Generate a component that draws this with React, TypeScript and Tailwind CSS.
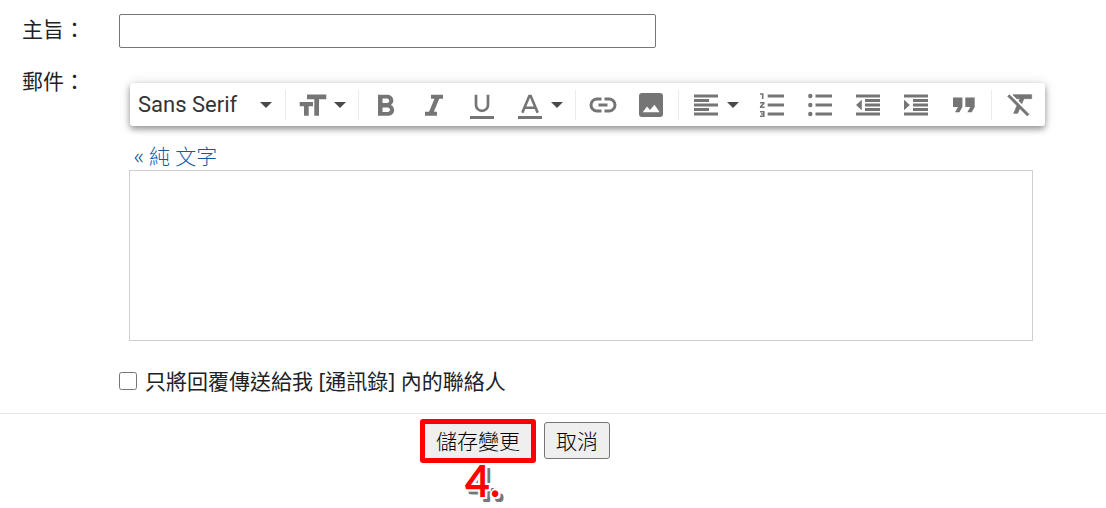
import React, { useState } from 'react';

interface IconProps {
  children: React.ReactNode;
}

const Icon: React.FC<IconProps> = ({ children }) => (
  <svg viewBox="0 0 28 28" className="w-7 h-7 shrink-0 text-[#757575]" fill="currentColor" aria-hidden="true">
    {children}
  </svg>
);

const Caret: React.FC = () => (
  <svg viewBox="0 0 12 6" className="w-3 h-1.5 shrink-0 text-[#4a4a4a]" fill="currentColor" aria-hidden="true">
    <path d="M0 0h12L6 6z" />
  </svg>
);

const Separator: React.FC = () => <div className="w-px h-[30px] mx-[3px] bg-[#ebebeb]" />;

interface ToolButtonProps {
  label: string;
  menu?: boolean;
  children: React.ReactNode;
}

const ToolButton: React.FC<ToolButtonProps> = ({ label, menu, children }) => (
  <button
    type="button"
    aria-label={label}
    className={`h-full flex items-center gap-[7px] pl-2.5 hover:bg-gray-100 ${menu ? 'w-[66px]' : 'w-12'}`}
  >
    <Icon>{children}</Icon>
    {menu && <Caret />}
  </button>
);

const Toolbar: React.FC = () => {
  const [font, setFont] = useState('Sans Serif');

  return (
    <div
      role="toolbar"
      aria-label="格式設定"
      className="flex items-center w-fit h-[43px] pr-0.5 ml-px bg-white rounded-[3px] shadow-[0_3px_6px_rgba(0,0,0,0.4),0_0_14px_rgba(0,0,0,0.1)]"
    >
      <div className="relative w-[152px] h-full">
        <select
          aria-label="字型"
          value={font}
          onChange={e => setFont(e.target.value)}
          className="appearance-none w-full h-full pl-2 bg-transparent font-[Roboto,sans-serif] text-[22px] text-[#333333] outline-none"
        >
          <option>Sans Serif</option>
          <option>Serif</option>
        </select>
        <div className="absolute right-2.5 inset-y-0 flex items-center pointer-events-none">
          <Caret />
        </div>
      </div>
      <Separator />
      <ToolButton label="大小" menu>
        <path d="M8 3.5h19.3v4.7H20v16.5h-4.7V8.2H8zM.7 11H14v4.2H9.7v9.5H5v-9.5H.7z" />
      </ToolButton>
      <Separator />
      <ToolButton label="粗體">
        <path
          transform="translate(-4.5 -2.3) scale(1.5)"
          d="M15.6 10.79c.97-.67 1.65-1.77 1.65-2.79 0-2.26-1.75-4-4-4H7v14h7.04c2.09 0 3.71-1.7 3.71-3.79 0-1.52-.86-2.82-2.15-3.42zM10 6.5h3c.83 0 1.5.67 1.5 1.5s-.67 1.5-1.5 1.5h-3v-3zm3.5 9H10v-3h3.5c.83 0 1.5.67 1.5 1.5s-.67 1.5-1.5 1.5z"
        />
      </ToolButton>
      <ToolButton label="斜體">
        <path transform="translate(-4 -2.3) scale(1.5)" d="M10 4v2.7h2.3l-3.6 8.6H6V18h8v-2.7h-2.1l3.6-8.6H18V4z" />
      </ToolButton>
      <ToolButton label="底線">
        <path d="M8 3.7v10.2a6 6 0 0 0 12 0V3.7" fill="none" stroke="currentColor" strokeWidth="2.7" />
        <path d="M2 25h24v3H2z" />
      </ToolButton>
      <ToolButton label="文字顏色" menu>
        <path d="M6.3 21.8L13.3 5h1.4l7 16.8M9 16.8h10" fill="none" stroke="currentColor" strokeWidth="2.6" />
        <path d="M2 25h24v3H2z" />
      </ToolButton>
      <Separator />
      <ToolButton label="連結">
        <path
          d="M12.5 8H8a6 6 0 0 0 0 12h4.5M15.5 8H20a6 6 0 0 1 0 12h-4.5M9.5 14h9"
          fill="none"
          stroke="currentColor"
          strokeWidth="3"
        />
      </ToolButton>
      <ToolButton label="插入圖片">
        <path
          fillRule="evenodd"
          d="M5 2h18a3 3 0 0 1 3 3v18a3 3 0 0 1-3 3H5a3 3 0 0 1-3-3V5a3 3 0 0 1 3-3zM5.7 21.3h17l-5.2-7.6-4.5 5.3-3-3.5z"
        />
      </ToolButton>
      <Separator />
      <ToolButton label="對齊" menu>
        <path d="M2 3.5h24v3H2zM2 8h15v3H2zM2 12.5h24v3H2zM2 17h15v3H2zM2 21.5h24v3H2z" />
      </ToolButton>
      <ToolButton label="編號清單">
        <path d="M9.7 3.5H26v3H9.7zM9.7 12.5H26v3H9.7zM9.7 21.5H26v3H9.7z" />
        <path
          d="M2 3h2.7v5M2 11.8h3.8v.6L2.7 15.6v.7h4M2 20.7h3.8v4.6H2M3 23h2.8"
          fill="none"
          stroke="currentColor"
          strokeWidth="1.6"
        />
      </ToolButton>
      <ToolButton label="項目符號清單">
        <path d="M9.5 3.5H26v3H9.5zM9.5 12.5H26v3H9.5zM9.5 21.5H26v3H9.5z" />
        <circle cx="4.3" cy="5" r="2.2" />
        <circle cx="4.3" cy="14" r="2.2" />
        <circle cx="4.3" cy="23" r="2.2" />
      </ToolButton>
      <ToolButton label="減少縮排">
        <path d="M2 3.5h24v3H2zM11 8h15v3H11zM11 12.5h15v3H11zM11 17h15v3H11zM2 21.5h24v3H2zM7.8 8.7v10.6L2 14z" />
      </ToolButton>
      <ToolButton label="增加縮排">
        <path d="M2 3.5h24v3H2zM11 8h15v3H11zM11 12.5h15v3H11zM11 17h15v3H11zM2 21.5h24v3H2zM2 8.7v10.6L7.8 14z" />
      </ToolButton>
      <ToolButton label="引文">
        <path d="M3 6.5h9.4V16l-3 5.3H5L8 16H3zM15.3 6.5h9.4V16l-3 5.3h-4.4l3-5.3h-5z" />
      </ToolButton>
      <Separator />
      <ToolButton label="移除格式">
        <path
          transform="translate(0 -3) scale(1.333)"
          d="M3.27 5L2 6.27l6.97 6.97L6.5 19h3l1.57-3.66L16.73 21 18 19.73 3.55 5.27 3.27 5zM6 5v.18L8.82 8h2.4l-.72 1.68 2.1 2.1L14.21 8H20V5H6z"
          stroke="currentColor"
          strokeWidth="0.5"
        />
      </ToolButton>
    </div>
  );
};

const App: React.FC = () => {
  const [subject, setSubject] = useState('');
  const [message, setMessage] = useState('');
  const [contactsOnly, setContactsOnly] = useState(false);

  return (
    <form
      onSubmit={e => e.preventDefault()}
      className="min-h-screen bg-white pt-3.5 font-['Noto_Sans','Noto_Sans_CJK_TC',sans-serif] text-[21px] leading-8 text-[#202124]"
    >
      <div className="grid grid-cols-[97px_minmax(0,1fr)] pl-[22px]">
        <label htmlFor="subject" className="leading-[30px]">主旨：</label>
        <input
          id="subject"
          type="text"
          value={subject}
          onChange={e => setSubject(e.target.value)}
          className="w-full max-w-[537px] h-[34px] px-2 border border-[#767676] rounded-[2px]"
        />

        <label htmlFor="message" className="mt-[18px] leading-[30px]">郵件：</label>
        <div className="mt-[35px] pl-2.5">
          <Toolbar />
          <a href="#" className="block w-fit mt-4 pl-[5px] leading-7 font-light text-[#1a56a8]">« 純 文字</a>
          <textarea
            id="message"
            value={message}
            onChange={e => setMessage(e.target.value)}
            className="block w-full max-w-[904px] h-[171px] p-2 border border-[#cfcfcf] resize-none outline-none"
          />
        </div>

        <div className="col-start-2 flex items-center mt-6">
          <input
            id="contacts"
            type="checkbox"
            checked={contactsOnly}
            onChange={e => setContactsOnly(e.target.checked)}
            className="w-[18px] h-[18px]"
          />
          <label htmlFor="contacts" className="pl-2">只將回覆傳送給我 [通訊錄] 內的聯絡人</label>
        </div>
      </div>

      <div className="mt-4 pt-[5px] pr-[76px] border-t border-[#e5e5e5] flex justify-center items-start gap-2 text-black">
        <div className="relative">
          <button
            type="submit"
            className="block h-11 px-[11px] bg-[#efefef] border-[5px] border-[#fe0000] rounded-[3px] font-light"
          >
            儲存變更
          </button>
          <span className="absolute left-[45px] top-9 font-[Lato,sans-serif] font-bold text-[43px] leading-[52px] text-[#fe0000] [text-shadow:2px_0_#fff,-2px_0_#fff,0_2px_#fff,0_-2px_#fff,2px_2px_#fff,-2px_2px_#fff,2px_-2px_#fff,4px_4px_#777,5px_5px_#777,3px_5px_#777,5px_3px_#777]">
            4.
          </span>
        </div>
        <button type="button" className="mt-[3px] h-[37px] px-[11px] bg-[#efefef] border border-[#767676] rounded-[3px] font-light">
          取消
        </button>
      </div>
    </form>
  );
};

export default App;
